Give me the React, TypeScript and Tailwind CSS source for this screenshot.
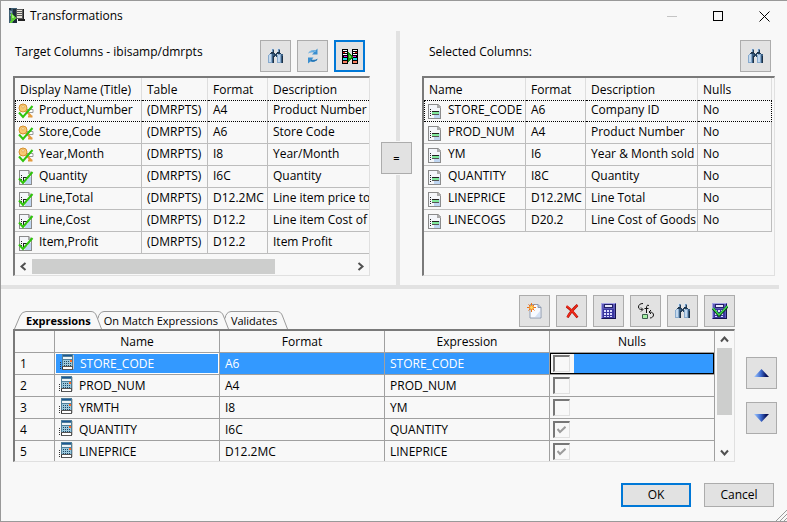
import React from "react";

type IconProps = { className?: string };

function PixelSvg({ className = "", children }: React.PropsWithChildren<IconProps>) {
  return (
    <svg
      aria-hidden="true"
      width="16"
      height="16"
      viewBox="0 0 16 16"
      shapeRendering="crispEdges"
      className={`block shrink-0 ${className}`}
    >
      {children}
    </svg>
  );
}

function AppIcon() {
  return (
    <PixelSvg>
      <path fill="#3f5f73" d="M0 0h8v15H0z" />
      <path fill="#1e2d3a" d="M4 1h4v14H4zM0 0h2v2H0z" />
      <path fill="#7d9db0" d="M1 3h2v2H1zM1 6h1v2H1zM3 11h3v1H3z" />
      <path fill="#5a5a5a" d="M7 1h8v10H7z" />
      <path fill="#e8e4da" d="M8 2h5v1H8zM8 4h5v1H8zM8 6h5v1H8zM8 8h5v2H8z" />
      <path fill="#222" d="M14 1h1v10h-1zM9 11h7v2H9z" />
      <path fill="#59c832" d="M2 5h1v1h1v1h1v1h1v1h1v2H6v1H5v1H4v1H3v1H1v-2h1z" />
      <path fill="#a4f078" d="M3 7h1v1h1v2H3z" />
    </PixelSvg>
  );
}

function Binoculars() {
  return (
    <PixelSvg>
      <path fill="#6f93b8" d="M3 1h3v4H3zM9 1h3v4H9z" />
      <path fill="#d3e4f4" d="M3 1h1v4H3zM9 1h1v4H9zM4 0h1v1H4zM10 0h1v1h-1z" />
      <path fill="#24405c" d="M5 2h1v3H5zM11 2h1v3h-1zM2 5h11v1H2zM6 6h3v3H6z" />
      <path fill="#87aacd" d="M0 7h1v8H0zM1 6h4v9H1zM9 7h1v8H9zM10 6h4v9h-4z" />
      <path fill="#c4d9ee" d="M1 7h1v7H1zM2 6h1v8H2zM10 7h2v7h-2z" />
      <path fill="#3a5e82" d="M4 6h2v9H4zM13 6h2v9h-2z" />
      <path fill="#1d3146" d="M5 8h1v7H5zM14 8h1v7h-1zM3 4h3v1H3zM9 4h3v1H9z" />
      <path fill="#e3e3e3" d="M7 5h1v1H7zM7 8h1v1H7z" />
    </PixelSvg>
  );
}

function RefreshIcon() {
  return (
    <svg aria-hidden="true" width="16" height="16" viewBox="0 0 16 16" className="block">
      <path d="M3 5.500C4.500 2.500 7.500 1.500 10.500 2.500L12.500 .5V6.500H7L9 4.500C7 3.800 5 4.200 3 5.500Z" fill="#3a8fd0" />
      <path d="M13 10.500C11.500 13.500 8.500 14.500 5.500 13.500L3 15.500V9.500H8.500L6.800 11.500C9 12.200 11 11.800 13 10.500Z" fill="#3a8fd0" />
      <path d="M4 4.500C5.500 3 8 2.500 10.500 3.500" stroke="#8cc6ee" fill="none" />
      <path d="M6 12.500C8 13.300 10 13 12 11.700" stroke="#1f6ba8" fill="none" />
    </svg>
  );
}

function MapColumnsIcon() {
  return (
    <PixelSvg>
      <path fill="#000" d="M0 1h6v15H0zM10 1h6v15h-6z" />
      <path fill="#fff" d="M1 2h4v1H1zM1 4h4v1H1zM1 6h4v1H1zM11 2h4v1h-4zM11 4h4v1h-4zM11 6h4v1h-4z" />
      <path fill="#f01818" d="M1 4h2v1H1zM13 4h2v1h-2z" />
      <path fill="#e818e8" d="M2 8h3v1H2zM11 8h3v1h-3z" />
      <path fill="#20e0e8" d="M1 10h4v2H1zM11 10h4v2h-4z" />
      <path fill="#f88060" d="M1 13h4v2H1zM11 13h4v2h-4z" />
      <path fill="#118a11" d="M6 4h1v1h1v1h1v1h1v1h1v2h-1v1H9v1H8v1H7v1H6z" />
      <path fill="#62d544" d="M7 7h1v1h1v2H7z" />
    </PixelSvg>
  );
}

function KeyCheckIcon() {
  return (
    <svg aria-hidden="true" width="16" height="16" viewBox="0 0 16 16" className="block shrink-0">
      <path d="M9 6.500h6v3H9z" fill="#fff" stroke="#999" />
      <circle cx="5" cy="5" r="4" fill="#f7ca73" stroke="#d5902f" />
      <circle cx="5" cy="3.800" r="1.200" fill="#fff3d0" stroke="#d5902f" strokeWidth=".6" />
      <path d="M8 8l6 6M10 13.500h4.500" stroke="#e39a3c" strokeWidth="2" fill="none" />
      <path d="M1 9.500l4 4.500L14.500 3" stroke="#2fc40c" strokeWidth="2" fill="none" />
    </svg>
  );
}

function FieldPage() {
  return (
    <>
      <path d="M1.500 1.500h9l3 3v10.500h-12z" fill="#f4f6fa" />
      <path d="M7 11h6v4H7zM10 8h3v3h-3z" fill="#bfd6f2" />
      <path d="M10 1h1l3 3v1h-4z" fill="#aaa" />
      <path d="M1 1h10v1H2v13h12v1H1zM13 5h1v11h-1z" fill="#8b8b8b" />
      <path d="M3 6h1v1H3zM3 8h1v1H3zM3 10h1v1H3zM3 12h1v1H3zM5 8h1v4H5z" fill="#222" />
    </>
  );
}

function FieldCheckIcon() {
  return (
    <svg aria-hidden="true" width="16" height="16" viewBox="0 0 16 16" className="block shrink-0">
      <FieldPage />
      <path d="M5 8h5v1H5z" fill="#222" />
      <path d="M1 9.500l4 4.500L14.500 3" stroke="#2fc40c" strokeWidth="2" fill="none" />
    </svg>
  );
}

function FieldIcon() {
  return (
    <PixelSvg>
      <FieldPage />
      <path d="M5 8h7v1H5z" fill="#222" />
      <path d="M5 9h7v2H5z" fill="#7fe89a" />
      <path d="M5 11h7v1H5z" fill="#555" />
    </PixelSvg>
  );
}

function CalcFieldIcon() {
  return (
    <PixelSvg className="mb-1">
      <path fill="#333" d="M1 8h1v1H1zM1 10h1v1H1zM1 12h1v1H1zM1 14h1v1H1zM3 11h1v5H3z" />
      <path fill="#4f7f99" d="M3 0h11v12H3z" />
      <path fill="#1b5796" d="M4 1h9v1H4z" />
      <path fill="#eef4f8" d="M4 3h9v2H4z" />
      <path fill="#9cc8dc" d="M4 6h9v6H4z" />
      <path fill="#1c4766" d="M5 7h1v1H5zM7 7h1v1H7zM9 7h1v1H9zM5 9h1v1H5zM7 9h1v1H7zM9 9h1v1H9zM11 9h1v1h-1zM5 11h1v1H5zM7 11h1v1H7zM9 11h1v1H9zM11 11h1v1h-1z" />
      <path fill="#ff6a22" d="M11 6h2v2h-2z" />
      <path fill="#fff" d="M4 13h9v2H4z" />
      <path fill="#555" d="M3 12h11v1H3zM3 15h11v1H3zM13 12h1v4h-1z" />
      <path fill="#c9c9c9" d="M14 1h1v14h-1z" />
    </PixelSvg>
  );
}

function NewPageIcon() {
  return (
    <svg aria-hidden="true" width="16" height="16" viewBox="0 0 16 16" className="block">
      <path d="M3 1.500h8l3 3V15H3z" fill="#f7faff" stroke="#8e9bb0" />
      <path d="M11 1.500v3h3" fill="#b9c6da" stroke="#8e9bb0" />
      <path d="M8 14l5-6v6z" fill="#d4e1f4" />
      <path d="M4.500 0v9M0 4.500h9M1.500 1.500l6 6M7.500 1.500l-6 6" stroke="#ee7218" strokeWidth="1" />
      <circle cx="4.500" cy="4.500" r="2" fill="#ffd65c" stroke="#f08a24" />
    </svg>
  );
}

function DeleteIcon() {
  return (
    <svg aria-hidden="true" width="16" height="16" viewBox="0 0 16 16" className="block">
      <path d="M2.500 3.500c4 2.500 7 6 11 11M13.500 2C9 6 6 9.500 3.500 14.500" stroke="#a80b06" strokeWidth="2.400" fill="none" />
      <path d="M2.500 3c4 2.500 7 6 10.500 11M13.500 2C9 6 6 9.500 3.500 14" stroke="#f02a18" strokeWidth="1.600" fill="none" />
    </svg>
  );
}

function CalculatorShape() {
  return (
    <>
      <path fill="#5b58b8" d="M0 0h15v16H0z" />
      <path fill="#a5a3e6" d="M0 0h14v1H1v14H0z" />
      <path fill="#16124f" d="M14 1h1v15H1v-1h13z" />
      <path fill="#222068" d="M3 1h9v4H3z" />
      <path fill="#e7e7fb" d="M4 2h7v2H4z" />
      <path fill="#3a37a0" d="M2 6h11v9H2z" />
      <path fill="#dcdcff" d="M3 7h2v2H3zM6 7h2v2H6zM9 7h2v2H9zM3 10h2v2H3zM6 10h2v2H6zM9 10h2v2H9zM3 13h2v1H3zM6 13h2v1H6zM9 13h2v1H9z" />
    </>
  );
}

function CalculatorIcon() {
  return (
    <PixelSvg>
      <CalculatorShape />
    </PixelSvg>
  );
}

function CalculatorCheckIcon() {
  return (
    <svg aria-hidden="true" width="16" height="16" viewBox="0 0 16 16" className="block">
      <CalculatorShape />
      <path d="M1 5.500l6 7L15.500 3.500" stroke="#063d12" strokeWidth="2.600" fill="none" />
      <path d="M1 5l6 7L15.500 3" stroke="#3ee04e" strokeWidth="1.400" fill="none" />
    </svg>
  );
}

function FunctionIcon() {
  return (
    <svg aria-hidden="true" width="16" height="16" viewBox="0 0 16 16" className="block">
      <path
        d="M5 .5C2 .5 .5 2 .5 4S2 6.500 4.500 6.500M3 4.500l2 2-2 2M11 2.500C9 1.500 8.500 3 8.500 5v5M6.500 5.500h4M13 7l-2 2 2 2M11.500 9c3 0 4 1.500 4 3s-1.500 3-3.500 3"
        stroke="#111"
        fill="none"
      />
      <path d="M4.500 11.500h5v4h-5z" fill="#a6efa6" stroke="#3b5f4b" />
    </svg>
  );
}

function MoveIcon({ down = false }: { down?: boolean }) {
  const id = down ? "move-down" : "move-up";
  return (
    <svg aria-hidden="true" width="16" height="8" viewBox="0 0 16 8" className="block">
      <defs>
        <linearGradient id={id}>
          <stop offset="0" stopColor="#a5ccff" />
          <stop offset=".45" stopColor="#3f6cd0" />
          <stop offset=".8" stopColor="#0a1560" />
          <stop offset="1" stopColor="#050b3c" />
        </linearGradient>
      </defs>
      <path d={down ? "M0 0h15L7.500 8z" : "M0 8h15L7.500 0z"} fill={`url(#${id})`} />
    </svg>
  );
}

function Chevron({ path }: { path: string }) {
  return (
    <svg aria-hidden="true" width="9" height="9" viewBox="0 0 9 9" className="block">
      <path d={path} fill="none" stroke="#505050" strokeWidth="2" />
    </svg>
  );
}

function ToolButton({
  label,
  active = false,
  children,
}: React.PropsWithChildren<{ label: string; active?: boolean }>) {
  return (
    <button
      type="button"
      aria-label={label}
      className={`grid h-8 w-[31px] shrink-0 place-items-center bg-[#e2e2e2] ${
        active ? "border-2 border-[#0078d7]" : "border border-[#acacac]"
      }`}
    >
      {children}
    </button>
  );
}

type ListRow = { icon: React.ReactNode; cells: string[] };

function ListTable({
  label,
  headers,
  cols,
  rows,
  closed = false,
}: {
  label: string;
  headers: string[];
  cols: string[];
  rows: ListRow[];
  closed?: boolean;
}) {
  return (
    <table aria-label={label} className="w-full table-fixed border-separate border-spacing-0">
      <colgroup>
        {cols.map((c, i) => (
          <col key={i} className={c} />
        ))}
      </colgroup>
      <thead>
        <tr className="h-[22px]">
          {headers.map((h, i) => (
            <th
              key={h}
              className={`overflow-hidden px-[5px] pt-[2px] text-left font-normal whitespace-nowrap ${
                i < headers.length - 1 || closed ? "border-r border-[#dedede]" : ""
              }`}
            >
              {h}
            </th>
          ))}
        </tr>
      </thead>
      <tbody>
        {rows.map((row, r) => (
          <tr key={r} className="h-[22px]">
            {row.cells.map((c, i) => (
              <td
                key={i}
                className={`h-[22px] overflow-hidden p-0 pb-[2px] align-middle leading-4 whitespace-nowrap ${
                  i < row.cells.length - 1 || closed ? "border-r border-r-[#bdbdbd]" : ""
                } ${
                  r === 0
                    ? "border-y border-y-black [border-top-style:dotted] [border-bottom-style:dotted]"
                    : "border-b border-b-[#bdbdbd]"
                } ${r === 0 && i === 0 ? "border-l border-l-black [border-left-style:dotted]" : ""} ${
                  r === 0 && closed && i === row.cells.length - 1
                    ? "border-r-black [border-right-style:dotted]"
                    : ""
                }`}
              >
                {i === 0 ? (
                  <span className={`flex h-4 items-center gap-[5px] ${r === 0 ? "pl-[2px]" : "pl-[3px]"}`}>
                    <span className="pt-[2px]">{row.icon}</span>
                    {c}
                  </span>
                ) : (
                  <span className="pl-[5px]">{c}</span>
                )}
              </td>
            ))}
          </tr>
        ))}
      </tbody>
    </table>
  );
}

const targetRows: ListRow[] = [
  { icon: <KeyCheckIcon />, cells: ["Product,Number", "(DMRPTS)", "A4", "Product Number"] },
  { icon: <KeyCheckIcon />, cells: ["Store,Code", "(DMRPTS)", "A6", "Store Code"] },
  { icon: <KeyCheckIcon />, cells: ["Year,Month", "(DMRPTS)", "I8", "Year/Month"] },
  { icon: <FieldCheckIcon />, cells: ["Quantity", "(DMRPTS)", "I6C", "Quantity"] },
  { icon: <FieldCheckIcon />, cells: ["Line,Total", "(DMRPTS)", "D12.2MC", "Line item price total"] },
  { icon: <FieldCheckIcon />, cells: ["Line,Cost", "(DMRPTS)", "D12.2", "Line item Cost of Goods"] },
  { icon: <FieldCheckIcon />, cells: ["Item,Profit", "(DMRPTS)", "D12.2", "Item Profit"] },
];

const selectedRows: ListRow[] = [
  { icon: <FieldIcon />, cells: ["STORE_CODE", "A6", "Company ID", "No"] },
  { icon: <FieldIcon />, cells: ["PROD_NUM", "A4", "Product Number", "No"] },
  { icon: <FieldIcon />, cells: ["YM", "I6", "Year & Month sold", "No"] },
  { icon: <FieldIcon />, cells: ["QUANTITY", "I8C", "Quantity", "No"] },
  { icon: <FieldIcon />, cells: ["LINEPRICE", "D12.2MC", "Line Total", "No"] },
  { icon: <FieldIcon />, cells: ["LINECOGS", "D20.2", "Line Cost of Goods", "No"] },
];

const expressions = [
  { name: "STORE_CODE", format: "A6", expression: "STORE_CODE", nulls: false },
  { name: "PROD_NUM", format: "A4", expression: "PROD_NUM", nulls: false },
  { name: "YRMTH", format: "I8", expression: "YM", nulls: false },
  { name: "QUANTITY", format: "I6C", expression: "QUANTITY", nulls: true },
  { name: "LINEPRICE", format: "D12.2MC", expression: "LINEPRICE", nulls: true },
];

const panel =
  "overflow-hidden border-t-2 border-r border-b border-l-2 border-t-[#7a7a7a] border-r-[#e0e0e0] border-b-[#e0e0e0] border-l-[#7a7a7a]";

function Tab({ label, selected = false }: { label: string; selected?: boolean }) {
  return (
    <button
      type="button"
      role="tab"
      aria-selected={selected}
      className={`flex h-[18px] text-[11px] ${selected ? "font-bold" : "-ml-[5px]"}`}
    >
      {selected ? (
        <svg aria-hidden="true" width="12" height="18" className="block">
          <path d="M.5 18L6 5Q8 .5 12 .5" fill="none" stroke="#9a9a9a" />
        </svg>
      ) : (
        <svg aria-hidden="true" width="7" height="18" className="block">
          <path d="M1 7.500Q2 1 7 .5" fill="none" stroke="#9a9a9a" />
        </svg>
      )}
      <span className="h-[18px] border-t border-[#9a9a9a] leading-[17px] whitespace-nowrap">{label}</span>
      <svg aria-hidden="true" width="11" height="18" className="block">
        <path d="M0 .5Q4 .5 5.500 5L10.500 18" fill="none" stroke="#9a9a9a" />
      </svg>
    </button>
  );
}

function NullsBox({ name, checked }: { name: string; checked: boolean }) {
  return (
    <span className="relative block h-[17px] w-[17px]">
      <input
        type="checkbox"
        aria-label={`Nulls for ${name}`}
        defaultChecked={checked}
        disabled={checked}
        className="block h-[17px] w-[17px] appearance-none border-t-2 border-r border-b border-l-2 border-t-[#777] border-r-[#e0e0e0] border-b-[#e0e0e0] border-l-[#777] bg-[#f8f8f8]"
      />
      {checked && (
        <svg aria-hidden="true" width="9" height="8" viewBox="0 0 9 8" className="absolute top-[5px] left-1">
          <path d="M.5 3l2.500 3L8.500 .8" fill="none" stroke="#9c9c9c" strokeWidth="2" />
        </svg>
      )}
    </span>
  );
}

function ExpressionsGrid() {
  const head = "border-r border-b border-[#a0a0a0] p-0 text-center font-normal";
  return (
    <div className={`flex h-[133px] ${panel}`}>
      <div className="min-w-0 flex-1">
        <table aria-label="Expressions" className="w-full table-fixed border-separate border-spacing-0">
          <colgroup>
            <col className="w-10" />
            <col />
            <col />
            <col />
            <col />
          </colgroup>
          <thead>
            <tr className="h-[22px]">
              <th className={head} aria-label="Row" />
              <th className={head}>Name</th>
              <th className={head}>Format</th>
              <th className={head}>Expression</th>
              <th className={head}>Nulls</th>
            </tr>
          </thead>
          <tbody>
            {expressions.map((e, i) => {
              const sel = i === 0;
              const cell = `h-[22px] border-r border-b border-[#a0a0a0] p-0 ${
                sel ? "bg-[#3399ff] text-white" : ""
              }`;
              return (
                <tr key={e.name} className="h-[22px]">
                  <th scope="row" className="border-r border-b border-[#a0a0a0] p-0 pl-[5px] text-left font-normal">
                    {i + 1}
                  </th>
                  <td className={cell}>
                    <span
                      className={`flex h-[21px] items-center gap-[5px] ${
                        sel ? "border border-white pl-[3px]" : "pl-[3px]"
                      }`}
                    >
                      <CalcFieldIcon />
                      {e.name}
                    </span>
                  </td>
                  <td className={cell}>
                    <span className="pl-[5px]">{e.format}</span>
                  </td>
                  <td className={cell}>
                    <span className="pl-[5px]">{e.expression}</span>
                  </td>
                  <td className={cell}>
                    {sel ? (
                      <span className="flex h-[21px] border border-black">
                        <span className="flex w-[23px] items-center bg-[#f8f8f8] pl-[2px]">
                          <NullsBox name={e.name} checked={e.nulls} />
                        </span>
                      </span>
                    ) : (
                      <span className="flex h-[21px] items-center pl-[3px]">
                        <NullsBox name={e.name} checked={e.nulls} />
                      </span>
                    )}
                  </td>
                </tr>
              );
            })}
          </tbody>
        </table>
      </div>
      <div className="flex w-[19px] flex-col items-center">
        <button type="button" aria-label="Scroll up" className="grid h-[17px] w-4 place-items-center">
          <Chevron path="M1 6.500l3.500-4 3.500 4" />
        </button>
        <div className="h-[67px] w-[15px] bg-[#cdcecd]" />
        <button type="button" aria-label="Scroll down" className="mt-auto grid h-[17px] w-4 place-items-center">
          <Chevron path="M1 2.500l3.500 4 3.500-4" />
        </button>
      </div>
    </div>
  );
}

export default function App() {
  return (
    <main className="flex min-h-screen flex-col border-t border-b border-l border-[#999] bg-[#f8f8f8] font-['Open_Sans','Noto_Sans',sans-serif] text-[12px] leading-4 text-black">
      <header className="flex h-[30px] items-center gap-[5px] pl-2">
        <AppIcon />
        <h1 className="flex-1">Transformations</h1>
        <div className="flex">
          <button type="button" aria-label="Minimize" disabled className="grid h-7 w-[46px] place-items-center">
            <span className="h-px w-[10px] bg-[#c4c4c4]" />
          </button>
          <button type="button" aria-label="Maximize" className="grid h-7 w-[46px] place-items-center">
            <span className="h-[10px] w-[10px] border border-black" />
          </button>
          <button type="button" aria-label="Close" className="grid h-7 w-[46px] place-items-center">
            <svg aria-hidden="true" width="11" height="11" viewBox="0 0 11 11">
              <path d="M.5 .5l10 10M10.500 .5l-10 10" stroke="#000" />
            </svg>
          </button>
        </div>
      </header>

      <div className="flex h-[254px]">
        <section className="min-w-0 grow basis-[380px] pr-[11px] pl-3">
          <div className="flex h-[45px] items-center justify-between pr-[5px]">
            <h2 className="pb-1 pl-[2px]">Target Columns - ibisamp/dmrpts</h2>
            <div className="flex gap-[6px] pt-1">
              <ToolButton label="Find">
                <Binoculars />
              </ToolButton>
              <ToolButton label="Refresh">
                <RefreshIcon />
              </ToolButton>
              <ToolButton label="Map columns" active>
                <MapColumnsIcon />
              </ToolButton>
            </div>
          </div>
          <div className={`flex h-[200px] flex-col justify-between ${panel}`}>
            <ListTable
              label="Target Columns"
              headers={["Display Name (Title)", "Table", "Format", "Description"]}
              cols={["w-[127px]", "w-[66px]", "w-[60px]", ""]}
              rows={targetRows}
            />
            <div className="flex h-[17px] items-center">
              <button type="button" aria-label="Scroll left" className="grid h-4 w-[17px] place-items-center">
                <Chevron path="M6.500 1l-4 3.500 4 3.500" />
              </button>
              <div className="flex-1">
                <div className="h-[15px] w-[76%] bg-[#cdcecd]" />
              </div>
              <button type="button" aria-label="Scroll right" className="grid h-4 w-[17px] place-items-center">
                <Chevron path="M2.500 1l4 3.500-4 3.500" />
              </button>
            </div>
          </div>
        </section>

        <div className="flex w-[34px] flex-col items-center">
          <div className="h-[110px] w-1 bg-[#e2e2e2]" />
          <button
            type="button"
            aria-label="Map equal columns"
            className="my-px h-8 w-[31px] self-start border border-[#acacac] bg-[#e2e2e2] text-[11px] font-semibold"
          >
            =
          </button>
          <div className="w-1 flex-1 bg-[#e2e2e2]" />
        </div>

        <section className="min-w-0 grow basis-[372px] pr-3 pl-[7px]">
          <div className="flex h-[45px] items-center justify-between pr-1">
            <h2 className="pb-1 pl-[7px]">Selected Columns:</h2>
            <div className="pt-1">
              <ToolButton label="Find selected column">
                <Binoculars />
              </ToolButton>
            </div>
          </div>
          <div className={`h-[200px] ${panel}`}>
            <div className="pr-[2px]">
              <ListTable
                label="Selected Columns"
                headers={["Name", "Format", "Description", "Nulls"]}
                cols={["w-[102px]", "w-[60px]", "w-[112px]", ""]}
                rows={selectedRows}
                closed
              />
            </div>
          </div>
        </section>
      </div>

      <div className="mr-2 h-1 bg-[#e2e2e2]" />

      <section className="flex gap-[11px] pt-[6px] pr-[10px] pl-3">
        <div className="min-w-0 flex-1">
          <div className="flex h-[34px] items-end justify-between">
            <div role="tablist" aria-label="Rules" className="flex pl-px">
              <Tab label="Expressions" selected />
              <Tab label="On Match Expressions" />
              <Tab label="Validates" />
            </div>
            <div className="flex gap-[6px] pb-[2px]">
              <ToolButton label="New">
                <NewPageIcon />
              </ToolButton>
              <ToolButton label="Delete">
                <DeleteIcon />
              </ToolButton>
              <ToolButton label="Calculator">
                <CalculatorIcon />
              </ToolButton>
              <ToolButton label="Functions">
                <FunctionIcon />
              </ToolButton>
              <ToolButton label="Find expression">
                <Binoculars />
              </ToolButton>
              <ToolButton label="Validate">
                <CalculatorCheckIcon />
              </ToolButton>
            </div>
          </div>
          <ExpressionsGrid />
        </div>
        <div className="flex flex-col gap-[13px] pt-[62px]">
          <ToolButton label="Move up">
            <MoveIcon />
          </ToolButton>
          <ToolButton label="Move down">
            <MoveIcon down />
          </ToolButton>
        </div>
      </section>

      <footer className="mt-auto">
        <div className="flex justify-end gap-[13px] pr-[13px]">
          <button type="submit" className="h-6 w-[70px] border-2 border-[#0078d7] bg-[#e2e2e2] leading-5">
            OK
          </button>
          <button type="button" className="h-6 w-[70px] border border-[#acacac] bg-[#e2e2e2] leading-5">
            Cancel
          </button>
        </div>
        <div className="flex h-[14px] items-end justify-end">
          <svg aria-hidden="true" width="11" height="11" viewBox="0 0 11 11" className="block">
            <path d="M0 11L11 0M4 11l7-7M8 11l3-3" stroke="#9a9a9a" />
          </svg>
        </div>
      </footer>
    </main>
  );
}
